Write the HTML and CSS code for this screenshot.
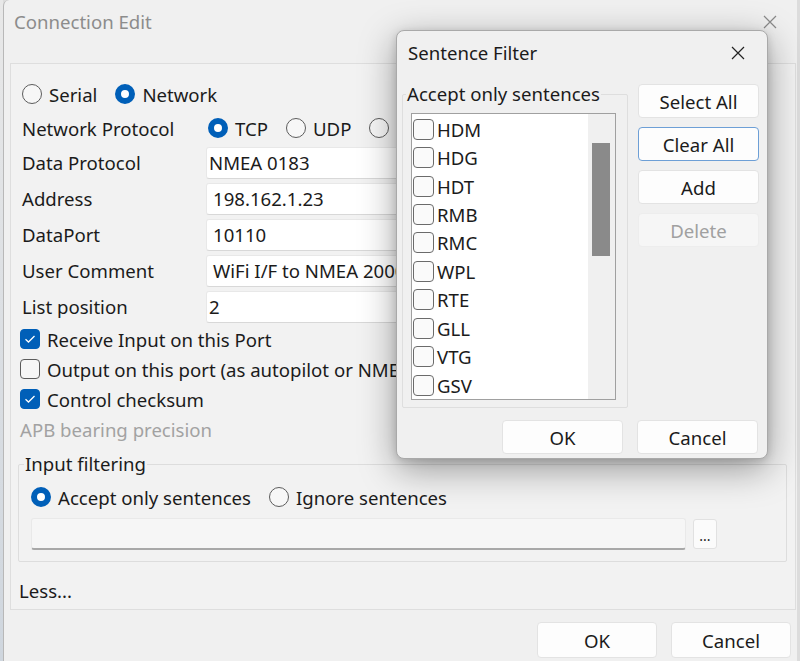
FILE: index.html
```html
<!DOCTYPE html>
<html>
<head>
<meta charset="utf-8">
<link rel="stylesheet" href="styles.css">
</head>
<body>
<div class="desk">
  <div class="edge"></div>
  <div class="win">
    <div class="titlebar">
      <span class="title">Connection Edit</span>
      <svg class="close" width="14" height="14" viewBox="0 0 14 14"><path d="M1 1L13 13M13 1L1 13" stroke="#8a8a8a" stroke-width="1.2" fill="none"/></svg>
    </div>
    <div class="panel">
      <div class="line radios">
        <span class="opt"><span class="radio"></span>Serial</span>
        <span class="opt"><span class="radio on"></span>Network</span>
      </div>
      <div class="line">
        <span class="lbl">Network Protocol</span>
        <span class="opt"><span class="radio on"></span>TCP</span>
        <span class="opt"><span class="radio"></span>UDP</span>
        <span class="opt"><span class="radio"></span></span>
      </div>
      <div class="form">
        <span class="lbl">Data Protocol</span><span class="field combo">NMEA 0183</span>
        <span class="lbl">Address</span><span class="field">198.162.1.23</span>
        <span class="lbl">DataPort</span><span class="field">10110</span>
        <span class="lbl">User Comment</span><span class="field">WiFi I/F to NMEA 2000</span>
        <span class="lbl">List position</span><span class="field combo">2</span>
      </div>
      <div class="checks">
        <div class="cline"><span class="check on"><svg width="12" height="10" viewBox="0 0 12 10"><path d="M1.5 5.2L4.5 8L10.5 2" stroke="#fff" stroke-width="1.3" fill="none"/></svg></span>Receive Input on this Port</div>
        <div class="cline"><span class="check"></span>Output on this port (as autopilot or NMEA)</div>
        <div class="cline"><span class="check on"><svg width="12" height="10" viewBox="0 0 12 10"><path d="M1.5 5.2L4.5 8L10.5 2" stroke="#fff" stroke-width="1.3" fill="none"/></svg></span>Control checksum</div>
        <div class="cline apb">APB bearing precision</div>
      </div>
      <div class="group">
        <span class="legend">Input filtering</span>
        <div class="line filt">
          <span class="opt"><span class="radio on"></span>Accept only sentences</span>
          <span class="opt"><span class="radio"></span>Ignore sentences</span>
        </div>
        <div class="filtrow">
          <span class="sentfield"></span>
          <span class="dots">...</span>
        </div>
      </div>
      <div class="less">Less...</div>
    </div>
    <div class="footer">
      <span class="btn wide">OK</span>
      <span class="btn wide">Cancel</span>
    </div>
  </div>

  <div class="dlg">
    <div class="dtitle">
      <span>Sentence Filter</span>
      <svg class="dclose" width="14" height="14" viewBox="0 0 14 14"><path d="M1 1L13 13M13 1L1 13" stroke="#222" stroke-width="1.2" fill="none"/></svg>
    </div>
    <div class="dbody">
      <div class="dgroup">
        <span class="dlegend">Accept only sentences</span>
        <div class="list">
          <div class="items">
            <div class="item"><span class="sbox"></span>HDM</div>
            <div class="item"><span class="sbox"></span>HDG</div>
            <div class="item"><span class="sbox"></span>HDT</div>
            <div class="item"><span class="sbox"></span>RMB</div>
            <div class="item"><span class="sbox"></span>RMC</div>
            <div class="item"><span class="sbox"></span>WPL</div>
            <div class="item"><span class="sbox"></span>RTE</div>
            <div class="item"><span class="sbox"></span>GLL</div>
            <div class="item"><span class="sbox"></span>VTG</div>
            <div class="item"><span class="sbox"></span>GSV</div>
          </div>
          <div class="track"><div class="thumb"></div></div>
        </div>
      </div>
      <div class="side">
        <span class="btn">Select All</span>
        <span class="btn focus">Clear All</span>
        <span class="btn">Add</span>
        <span class="btn disabled">Delete</span>
      </div>
    </div>
    <div class="dfoot">
      <span class="btn wide">OK</span>
      <span class="btn wide">Cancel</span>
    </div>
  </div>
</div>
</body>
</html>
```

FILE: styles.css
```css
* { box-sizing: border-box; }
html, body { margin: 0; padding: 0; }
body {
  width: 800px; height: 661px; overflow: hidden;
  background: #dcdcdc;
  font-family: "Noto Sans", "Open Sans", sans-serif;
  font-size: 18.6px;
  color: #1b1b1b;
}
.desk { position: relative; display: flex; width: 800px; height: 661px; }
.edge { width: 3px; background: linear-gradient(#e8e8e8, #cfd6de); }
.win {
  width: 794px; height: 661px;
  background: #f0f0f0;
  border-left: 1px solid #b8b8b8;
  border-top-left-radius: 6px;
  display: flex; flex-direction: column;
}
.titlebar {
  height: 63px; display: flex; justify-content: space-between;
  padding: 9px 20px 0 10px;
}
.title { color: #8c8c8c; font-size: 18.6px; line-height: 26px; }
.close { margin-top: 6px; }
.panel {
  margin-left: 6px; width: 786px; height: 547px;
  border: 1px solid #dedede; background: #f2f2f2;
  padding: 15px 0 0 11px;
  display: flex; flex-direction: column;
}
.line { display: flex; align-items: center; height: 30px; }
.line + .line { margin-top: 4px; }
.opt { display: flex; align-items: center; margin-right: 18px; white-space: nowrap; }
.radio {
  width: 20px; height: 20px; border-radius: 50%; flex: none;
  border: 1px solid #5c5c5c; background: #f7f7f7; margin-right: 7px;
}
.radio.on { border: 6px solid #005fb8; background: #fff; }
.lbl { width: 186px; flex: none; }
.form {
  display: grid; grid-template-columns: 184px 520px;
  grid-auto-rows: 33px; row-gap: 3px; align-items: center;
  margin-top: 3px;
}
.field {
  height: 32px; background: #fff; border: 1px solid #e8e8e8;
  border-bottom-color: #d8d8d8;
  border-radius: 3px; padding-left: 6px; line-height: 30px;
  white-space: nowrap; overflow: hidden;
}
.field.combo { padding-left: 2px; }
.checks { display: flex; flex-direction: column; margin-top: 1px; }
.cline { display: flex; align-items: center; height: 30px; margin-left: -2px; white-space: nowrap; }
.check {
  width: 20px; height: 20px; border-radius: 4px; margin-right: 7px; flex: none;
  border: 1px solid #5c5c5c; background: #f7f7f7;
  display: flex; align-items: center; justify-content: center;
}
.check.on { border-color: #005fb8; background: #005fb8; }
.apb { color: #a2a2a2; }
.group {
  position: relative;
  margin: 20px 0 0 -4px; width: 769px; height: 98px;
  border: 1px solid #dddddd; border-radius: 2px;
  padding: 17px 0 0 12px;
}
.legend {
  position: absolute; left: 5px; top: -14px; padding: 0 1px;
  background: #f2f2f2; line-height: 26px;
}
.filtrow { display: flex; align-items: center; margin-top: 6px; }
.sentfield {
  width: 655px; height: 32px; background: #f6f6f6;
  border: 1px solid #e9e9e9; border-bottom: 2px solid #a8a8a8; border-radius: 3px;
}
.dots {
  width: 24px; height: 30px; margin-left: 7px; background: #fbfbfb;
  border: 1px solid #e1e1e1; border-radius: 3px; font-size: 14px;
  display: flex; align-items: flex-end; justify-content: center; padding-bottom: 3px;
}
.less { margin-top: 16px; margin-left: -3px; line-height: 26px; }
.footer { display: flex; justify-content: flex-end; gap: 14px; padding: 12px 6px 0 0; }
.btn {
  display: flex; align-items: center; justify-content: center;
  width: 121px; height: 34px; background: #fdfdfd;
  border: 1px solid #e3e3e3; border-radius: 4px; color: #1b1b1b;
}
.footer .btn { width: 120px; height: 36px; }
.btn.focus { border: 1px solid #6d9fd6; }
.btn.disabled { background: #f6f6f6; color: #a0a0a0; border-color: #ededed; }

.dlg {
  position: absolute; left: 396px; top: 30px; width: 372px; height: 429px;
  background: #f0f0f0; border: 1px solid #a9a9a9; border-radius: 8px;
  box-shadow: 0 10px 36px rgba(0,0,0,0.38), 0 2px 8px rgba(0,0,0,0.15);
  display: flex; flex-direction: column;
}
.dtitle {
  height: 43px; display: flex; justify-content: space-between; align-items: center;
  padding: 0 22px 0 11px; font-size: 18.6px;
}
.dbody { display: flex; height: 337px; }
.dgroup {
  position: relative; margin: 20px 0 0 5px; width: 226px; height: 314px;
  border: 1px solid #dedede; border-radius: 2px;
}
.dlegend {
  position: absolute; left: 3px; top: -14px; background: #f0f0f0; padding: 0 1px;
  line-height: 26px;
}
.list {
  position: absolute; left: 8px; top: 18px; width: 205px; height: 287px;
  background: #fff; border: 1px solid #a0a0a0; display: flex;
}
.items { flex: 1; padding-top: 1px; }
.item { display: flex; align-items: center; height: 28.45px; padding-left: 1px; }
.sbox {
  width: 21px; height: 21px; border: 1px solid #6b6b6b; border-radius: 4px;
  background: #fafafa; margin-right: 3px; flex: none;
}
.track { width: 27px; background: #f0f0f0; padding: 29px 0 0 4px; }
.thumb { width: 18px; height: 113px; background: #8a8a8a; }
.side { display: flex; flex-direction: column; gap: 9px; margin: 10px 0 0 10px; }
.dfoot { display: flex; gap: 14px; padding: 9px 0 0 105px; }
.dfoot .btn { width: 121px; height: 34px; }
```
